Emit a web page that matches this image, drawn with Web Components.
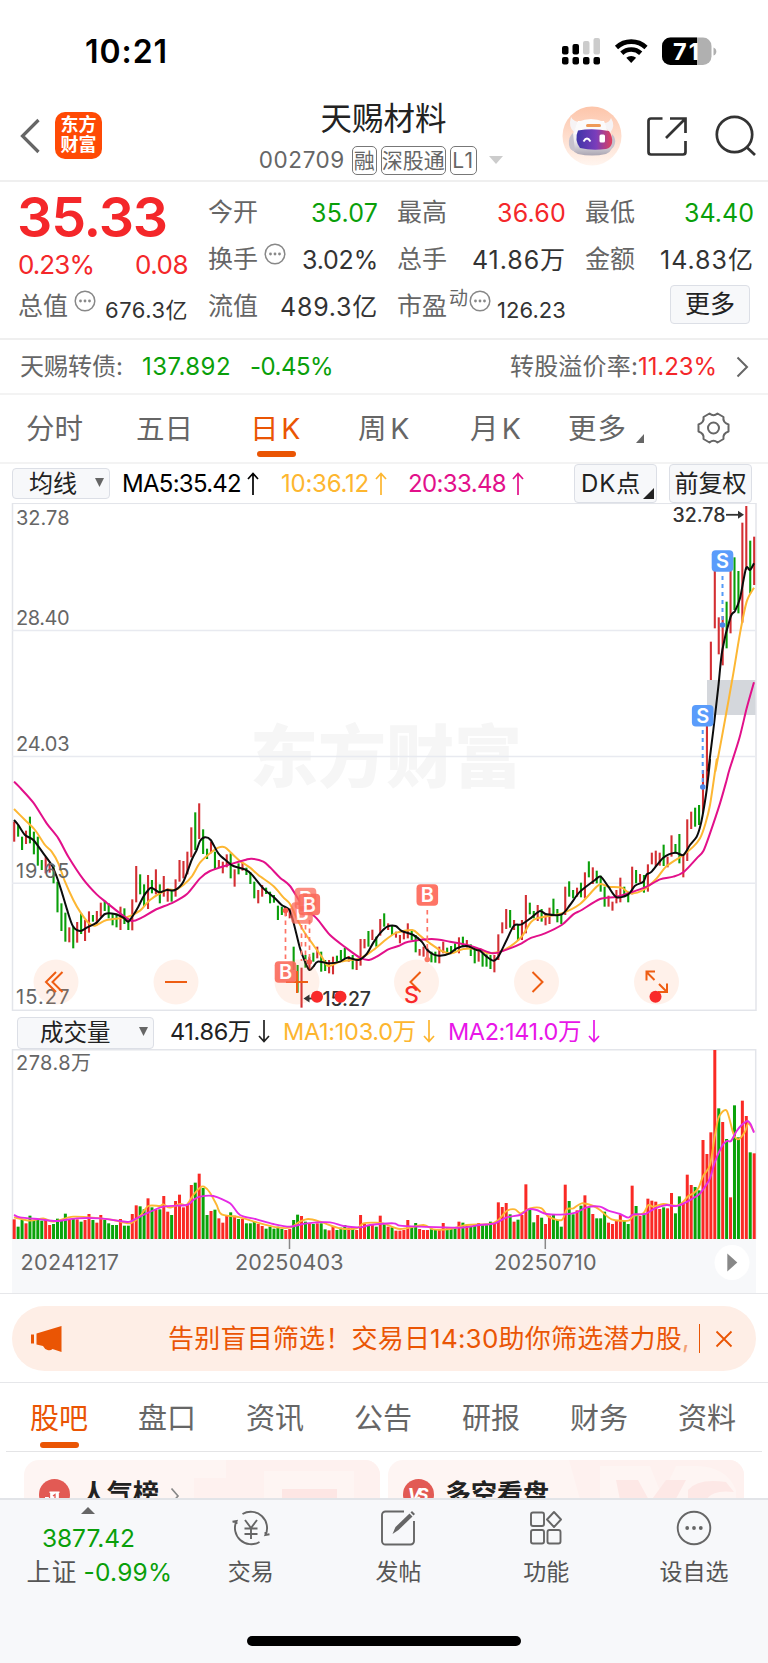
<!DOCTYPE html>
<html lang="zh-CN">
<head>
<meta charset="utf-8">
<title>天赐材料 002709</title>
<style>
	body {
		margin: 0;
		width: 768px;
		height: 1663px;
		overflow: hidden;
		background: #fff;
		color: #333;
		font-family: Inter, "Noto Sans CJK SC", sans-serif;
		font-size: 24px;
		line-height: 1;
	}
</style>
</head>
<body>
<stock-page></stock-page>

<script>
const UP = "#f4272a";
const DOWN = "#0a9f0a";

class BaseElement extends HTMLElement {
	get template() {
		return "";
	}
	connectedCallback() {
		if (this.shadowRoot) return;
		let t = document.createElement("template");
		t.innerHTML = `
		<style>
			:host { display: block; box-sizing: border-box; }
			* { box-sizing: border-box; }
			svg { display: block; flex: none; }
			.row { display: flex; align-items: center; }
			.up { color: ${UP}; }
			.down { color: ${DOWN}; }
		</style>` + this.template;
		this.attachShadow({ mode: "open" });
		this.shadowRoot.appendChild(t.content.cloneNode(true));
	}
}

// One line of text tracked out (or in) to the width in "w"
class FitText extends BaseElement {
	get template() {
		return `<style>:host { display: inline-block; white-space: nowrap; flex: none; }</style><span><slot></slot></span>`;
	}
	connectedCallback() {
		super.connectedCallback();
		let w = Number(this.getAttribute("w"));
		if (!w) return;
		let n = [...this.textContent].length;
		let own = this.shadowRoot.querySelector("span").getBoundingClientRect().width;
		this.style.letterSpacing = (w - own) / n + "px";
		this.style.width = w + "px";
	}
}
customElements.define("fit-text", FitText);

class StatusBar extends BaseElement {
	get template() {
		return `
		<style>
			:host { height: 92px; padding: 35px 51px 0 85px; }
			.row { height: 32px; }
			.time { font-size: 32px; font-weight: 600; color: #000; margin: 2px auto 0 0; }
		</style>
		<div class="row">
			<fit-text class="time" w="83">10:21</fit-text>
			<svg width="155" height="32" viewBox="562 35 155 32">
				<g>
					<rect x="562" y="46" width="6.5" height="8.5" rx="2"/>
					<rect x="572.5" y="44" width="6.5" height="10.500" rx="2"/>
					<rect x="583" y="41" width="6.500" height="13.5" rx="2" fill="#ccc"/>
					<rect x="593.500" y="38" width="6.500" height="16.5" rx="2" fill="#ccc"/>
					<rect x="562" y="57" width="6.500" height="7.500" rx="2"/>
					<rect x="572.500" y="57" width="6.500" height="7.500" rx="2"/>
					<rect x="583" y="57" width="6.500" height="7.500" rx="2"/>
					<rect x="593.500" y="57" width="6.500" height="7.500" rx="2"/>
				</g>
				<g fill="none" stroke="#000" stroke-width="4.600">
					<path d="M616.500 47.500a21.500 21.500 0 0 1 29.500 0"/>
					<path d="M621.800 53.300a13.800 13.800 0 0 1 18.900 0"/>
				</g>
				<path d="M626.300 57.800a7.300 7.300 0 0 1 9.800 0L631.200 63z"/>
				<rect x="662" y="37.500" width="49.500" height="27.500" rx="8.500" fill="#b0b0b0"/>
				<path d="M670.500 37.500H697V65h-26.500a8.500 8.500 0 0 1-8.500-8.500V46a8.500 8.500 0 0 1 8.500-8.500z"/>
				<path d="M713.500 47.500q2.800 1 2.800 4t-2.800 4z" fill="#b0b0b0"/>
				<text x="673" y="60" font-size="23.500" font-weight="700" fill="#fff" textLength="26">71</text>
			</svg>
		</div>`;
	}
}
customElements.define("status-bar", StatusBar);

class NavBar extends BaseElement {
	get template() {
		return `
		<style>
			:host { height: 90px; border-bottom: 2px solid #efefef; }
			.bar { height: 88px; padding: 0 11px 0 20px; }
			.logo {
				width: 47px; height: 47px; margin: 0 158px 0 14px; border-radius: 10px;
				background: #ff4a05; color: #fff; font-size: 18px; font-weight: 700; position: relative; top: -1px;
				display: flex; flex-direction: column; align-items: center; justify-content: center; gap: 2px;
			}
			.title { width: 248px; }
			.name { font-size: 31.500px; text-align: center; color: #222; height: 32px; margin-top: 6px; }
			.code { color: #666; font-size: 22.500px; gap: 4px; margin-top: 10px; height: 30px; }
			.tag { border: 1.500px solid #777; border-radius: 5px; height: 29px; font-size: 21px; display: flex; align-items: center; justify-content: center; }
		</style>
		<div class="row bar">
			<svg width="21" height="36" viewBox="0 0 21 36"><path d="M18.500 2 2.500 18l16 16" fill="none" stroke="#666" stroke-width="3.200"/></svg>
			<div class="logo"><span>东方</span><span>财富</span></div>
			<div class="title">
				<div class="name">天赐材料</div>
				<div class="row code">
					<fit-text w="86" style="margin:0 3px 0 -1px">002709</fit-text>
					<span class="tag" style="width:25px">融</span>
					<span class="tag" style="width:65px">深股通</span>
					<span class="tag" style="width:27px"><fit-text w="22">L1</fit-text></span>
					<svg width="14" height="8" viewBox="0 0 14 8" style="margin-left:8px"><path d="M0 0h14L7 8z" fill="#ccc"/></svg>
				</div>
			</div>
			<svg width="60" height="60" viewBox="0 0 60 60" style="margin-left:55px">
				<defs>
					<linearGradient id="halo" x2="0" y2="1"><stop offset="0" stop-color="#fdc5aa"/><stop offset="1" stop-color="#fff5ef"/></linearGradient>
					<linearGradient id="visor"><stop offset="0" stop-color="#3f35a8"/><stop offset=".55" stop-color="#7a3dbb"/><stop offset="1" stop-color="#e0405c"/></linearGradient>
					<linearGradient id="shell" x2="0" y2="1"><stop offset="0" stop-color="#fff"/><stop offset=".55" stop-color="#f0eef0"/><stop offset="1" stop-color="#aaa5b2"/></linearGradient>
				</defs>
				<circle cx="30" cy="30" r="29.500" fill="url(#halo)"/>
				<path d="M9 11q-3 10 3 15l9-10q-9 1-12-5zM49 12q5 8-1 15l-8-10q7 1 9-5z" fill="#f6f3f5"/>
				<path d="M16 15h26l4 12 5 6q1 12-7 15-14 3-28 0-9-4-9-14l4-6z" fill="url(#shell)"/>
				<path d="M16 16Q29 10 42 16l4 12H12z" fill="#fbfafb"/>
				<path d="M11 27q-5 4-4 12 1 6 6 6zM50 28q4 4 3 9t-4 6z" fill="#c6c2cc"/>
				<rect x="24" y="18" width="15" height="3" rx="1.500" fill="#ef9a58"/>
				<path d="M16 24.500Q31 22 47 25q4 6 3 12-1 5-6 6-14 2-26-1-6-8-2-17.500z" fill="url(#visor)"/>
				<path d="M21.500 35.500q3.500-6 7 0" fill="none" stroke="#fff" stroke-width="1.800"/>
				<rect x="37.500" y="28.500" width="5.500" height="8" rx="1.500" fill="#fff"/>
			</svg>
			<svg width="40" height="40" viewBox="0 0 40 40" style="margin-left:25px" fill="none" stroke="#333" stroke-width="2.700">
				<path d="M15.500 2.500H4A2.500 2.500 0 0 0 1.500 5v31A2.500 2.500 0 0 0 4 38.500h32a2.500 2.500 0 0 0 2.500-2.500V25M23 2.500h15.500V17M38 3 19 22"/>
			</svg>
			<svg width="42" height="42" viewBox="0 0 42 42" style="margin-left:28px" fill="none" stroke="#333" stroke-width="2.700">
				<circle cx="19.500" cy="19.500" r="17.700"/><path d="m31.500 32 8.500 8"/>
			</svg>
		</div>`;
	}
}
customElements.define("nav-bar", NavBar);

// Small circled ellipsis behind a label
class InfoDot extends BaseElement {
	get template() {
		return `
		<style>:host { flex: none; }</style>
		<svg width="22" height="22" viewBox="0 0 22 22"><circle cx="11" cy="11" r="9.800" fill="none" stroke="#888" stroke-width="1.500"/><g fill="#888"><circle cx="6.500" cy="11" r="1.400"/><circle cx="11" cy="11" r="1.400"/><circle cx="15.500" cy="11" r="1.400"/></g></svg>`;
	}
}
customElements.define("info-dot", InfoDot);

class QuotePanel extends BaseElement {
	get template() {
		return `
		<style>
			:host { height: 158px; border-bottom: 2px solid #efefef; display: flex; padding: 7px 13px 0 18px; gap: 20px; }
			.price { width: 170px; }
			.big { display: block; font-size: 55.500px; font-weight: 600; height: 53px; line-height: 55px; margin-left: -1px; }
			.pct { font-size: 26px; height: 41px; justify-content: space-between; padding-top: 4px; }
			.grid { display: grid; grid-template-columns: 170px 169px 169px; column-gap: 19px; grid-auto-rows: 47px; height: 141px; }
			.cell { display: flex; align-items: center; height: 47px; }
			.cell > :last-child { margin-left: auto; }
			.k { font-size: 25px; color: #666; flex: none; }
			.v { font-size: 25px; margin-top: 1px; }
			.s { font-size: 22px; margin-top: 6px; }
			info-dot { margin: -12px 0 0 6px; }
			sup + info-dot { margin-left: 5px; }
			sup { font-size: 19px; color: #666; margin: -16px -4px 0 2px; }
			.more { margin: 0 4px 0 auto; width: 80px; height: 39px; border: 1.500px solid #dcdfe6; border-radius: 4px; background: #f7f8fa; font-size: 25px; display: flex; align-items: center; justify-content: center; color: #222; position: relative; top: -2px; }
		</style>
		<div class="price">
			<fit-text class="big up" w="150">35.33</fit-text>
			<div class="row pct up"><fit-text w="76">0.23%</fit-text><fit-text w="53">0.08</fit-text></div>
			<div class="cell"><span class="k">总值</span><info-dot></info-dot><fit-text class="s" w="83">676.3亿</fit-text></div>
		</div>
		<div class="grid">
			<div class="cell"><span class="k">今开</span><fit-text class="v down" w="67">35.07</fit-text></div>
			<div class="cell"><span class="k">最高</span><fit-text class="v up" w="69">36.60</fit-text></div>
			<div class="cell"><span class="k">最低</span><fit-text class="v down" w="70">34.40</fit-text></div>
			<div class="cell"><span class="k">换手</span><info-dot></info-dot><fit-text class="v" w="76">3.02%</fit-text></div>
			<div class="cell"><span class="k">总手</span><fit-text class="v" w="94">41.86万</fit-text></div>
			<div class="cell"><span class="k">金额</span><fit-text class="v" w="94">14.83亿</fit-text></div>
			<div class="cell"><span class="k">流值</span><fit-text class="v" w="98">489.3亿</fit-text></div>
			<div class="cell"><span class="k">市盈</span><sup>动</sup><info-dot></info-dot><fit-text class="s" w="69">126.23</fit-text></div>
			<div class="cell"><span class="more">更多</span></div>
		</div>`;
	}
}
customElements.define("quote-panel", QuotePanel);

class BondRow extends BaseElement {
	get template() {
		return `
		<style>
			:host { height: 55px; border-bottom: 2px solid #f3f3f3; font-size: 24px; color: #666; }
			.row { height: 53px; padding: 1px 19px 0 20px; }
		</style>
		<div class="row">
			<fit-text w="103">天赐转债:</fit-text>
			<fit-text class="down" w="89" style="margin-left:19px">137.892</fit-text>
			<fit-text class="down" w="83" style="margin-left:19px">-0.45%</fit-text>
			<fit-text w="128" style="margin-left:auto">转股溢价率:</fit-text>
			<fit-text class="up" w="79">11.23%</fit-text>
			<svg width="13" height="22" viewBox="0 0 13 22" style="margin-left:19px"><path d="m1.500 1.500 9.500 9.500-9.500 9.500" fill="none" stroke="#666" stroke-width="2"/></svg>
		</div>`;
	}
}
customElements.define("bond-row", BondRow);

class PeriodTabs extends BaseElement {
	get template() {
		return `
		<style>
			:host { height: 69px; border-bottom: 2px solid #f3f3f3; font-size: 28.500px; color: #666; }
			.bar { height: 67px; padding: 2px 38px 0 26px; }
			.on { color: #ea5504; display: flex; flex-direction: column; align-items: center; gap: 8px; margin: 13px 0 0 57px; }
			.on::after { content: ""; width: 39px; height: 6px; border-radius: 3px; background: currentColor; }
		</style>
		<div class="row bar">
			<span>分时</span>
			<span style="margin-left:53px">五日</span>
			<span class="on"><fit-text w="53">日K</fit-text></span>
			<fit-text w="55" style="margin-left:55px">周K</fit-text>
			<fit-text w="54" style="margin-left:57px">月K</fit-text>
			<span class="row" style="margin-left:44px"><fit-text w="59">更多</fit-text><svg width="8" height="9" viewBox="0 0 8 9" style="margin:18px 0 0 9px"><path d="M8 0v9H0z" fill="#666"/></svg></span>
			<svg width="33" height="32" viewBox="0 0 33 32" style="margin:-3px 0 0 auto" fill="none" stroke="#666" stroke-width="2" stroke-linejoin="round">
				<path d="M12.500 1.500Q16.500 5 20.500 1.500L26.500 5Q25.500 10.500 31.500 12.500V19.500Q25.500 21.500 26.500 27L20.500 30.500Q16.500 27 12.500 30.500L6.500 27Q7.500 21.500 1.500 19.500V12.500Q7.500 10.500 6.500 5Z"/>
				<circle cx="16.500" cy="16" r="5.500"/>
			</svg>
		</div>`;
	}
}
customElements.define("period-tabs", PeriodTabs);

class DropBox extends BaseElement {
	get template() {
		return `
		<style>
			:host { display: flex; align-items: center; height: 31px; flex: none; border: 1.500px solid #dcdfe6; border-radius: 4px; background: #f7f8fa; color: #222; padding-right: 5px; }
			svg { margin: -3px 0 0 auto; }
		</style>
		<slot></slot>
		<svg width="9" height="9" viewBox="0 0 9 9"><path d="M0 0h9L4.500 9z" fill="#666"/></svg>`;
	}
}
customElements.define("drop-box", DropBox);

// Thin arrow after an average, dir="up" or "down"
class TrendArrow extends BaseElement {
	get template() {
		let d = this.getAttribute("dir") == "up" ? "M6 23V1.500M1 7l5-5.500L11 7" : "M6 0v21.500M1 16l5 5.500 5-5.500";
		return `
		<style>:host { flex: none; }</style>
		<svg width="12" height="23" viewBox="0 0 12 23"><path d="${d}" fill="none" stroke="currentColor" stroke-width="1.700"/></svg>`;
	}
}
customElements.define("trend-arrow", TrendArrow);

class AverageRow extends BaseElement {
	get template() {
		return `
		<style>
			:host { height: 39px; }
			.bar { height: 39px; padding: 0 16px 0 12px; font-size: 24px; }
			drop-box { width: 98px; padding-left: 16px; }
			trend-arrow { margin-left: 6px; }
			.btn { height: 39px; border: 1.500px solid #dcdfe6; border-radius: 4px; background: #f7f8fa; color: #222; display: flex; align-items: center; justify-content: center; }
		</style>
		<div class="row bar">
			<drop-box>均线</drop-box>
			<fit-text w="119" style="margin-left:12px;color:#000">MA5:35.42</fit-text><trend-arrow dir="up" style="color:#000"></trend-arrow>
			<fit-text w="88" style="margin-left:22px;color:#fdb62f">10:36.12</fit-text><trend-arrow dir="up" style="color:#fdb62f"></trend-arrow>
			<fit-text w="98" style="margin-left:21px;color:#e2108a">20:33.48</fit-text><trend-arrow dir="up" style="color:#e2108a"></trend-arrow>
			<span class="btn" style="width:83px;margin-left:auto;padding-left:4px"><fit-text w="60">DK点</fit-text><svg width="11" height="11" viewBox="0 0 11 11" style="margin:20px 0 0 2px"><path d="M11 0v11H0z" fill="#222"/></svg></span>
			<span class="btn" style="width:83px;margin-left:12px">前复权</span>
		</div>`;
	}
}
customElements.define("average-row", AverageRow);

// Bars of the day chart: colour, high, low (pixels down the page)
const BARS = [];
function addBars(top, text) {
	for (let s of text.trim().split(/\s+/)) {
		let [a, b] = s.slice(1).split("-");
		BARS.push({ c: s[0], hi: top + a / 3, lo: top + b / 3 });
	}
}
addBars(740, `R245-305 G255-290 G290-330 R272-312 G230-310 G275-343 G290-377 G360-390 R350-400 R370-398
	G375-430 G425-517 G490-573 G518-605 R562-607 G560-625 R546-608 G520-582 R540-603 R514-578
	G525-545 R513-550 R488-530 G483-513 G490-535 G520-556 G520-562 R500-570 G505-552 G535-570
	R478-571 R378-487 G403-463 G433-498 R405-507 G420-460 R388-463 G433-490 R408-470 R445-485
	G450-485 R418-470 R360-425 R363-415 R335-403 R262-352 G217-330 R190-297 G268-342 G326-357
	R305-340 G335-388 R360-383 R365-400 R343-382 G340-415 R388-440 G370-403 R368-392 G383-405
	G397-432 G425-475 R450-490 R435-470 G443-462 G455-490 G465-488 G497-540 G500-525 R505-528`);
addBars(780, `R385-415 G500-570 G555-638 R563-683 G525-563 R530-570 G518-545 R500-535 G515-575 G540-573
	R540-580 R530-583 G527-545 G510-540 G503-535 R528-545 G525-568 R540-570 R477-557 R477-505
	G453-500 R449-480 G470-500 R417-467 G400-440 R430-450 G435-465 R455-473 R465-490 R455-478
	R430-475 G450-480 G465-517 R507-527 R500-530 R505-545 G515-547 G515-548 R500-550 R485-520
	G503-525 G498-520 G490-515 R472-520 G470-500 R480-503 G493-528 G507-550 R510-545 G520-560
	G523-560 G525-567 R525-577 R463-540 R427-460 R387-447 G390-443 R420-450 G433-483 R420-480 R345-460`);
addBars(740, `G488-523 G513-535 R495-543 G507-545 R520-556 R503-552 G476-525 G507-547 G520-552 R440-525
	G424-470 G450-475 R443-470 G428-472 R397-475 G364-412 R382-432 G392-430 G407-455 G440-500
	R467-500 R485-512 R450-490 R413-487 G440-472 G455-487 R380-463 G390-430 R402-427 G405-458
	R373-455 R338-373 R332-380 R338-377 G314-378 R350-382 R286-350 G312-340 G282-370 R343-412
	R238-363 R215-267 G203-260 G195-255 R90-220`);
addBars(490, `R680-890 R455-570 R230-415 R382-493 R378-526 G335-475 R213-430 G202-360 G243-370 R98-398
	R48-240 G152-310 R140-285`);

const VOLUMES = [643, 665, 645, 655, 632, 645, 643, 647, 645, 660, 657, 641, 645, 626, 645, 640, 643, 650, 645, 627,
	645, 653, 630, 645, 655, 660, 660, 642, 662, 662, 627, 601, 604, 613, 580, 607, 615, 613, 573, 620,
	630, 588, 569, 607, 600, 540, 533, 506, 549, 630, 618, 614, 640, 653, 633, 622, 632, 642, 642, 655,
	655, 650, 657, 663, 671, 665, 671, 665, 672, 675, 672, 645, 629, 633, 650, 655, 657, 655, 655, 673,
	676, 663, 675, 668, 660, 668, 667, 675, 630, 657, 660, 660, 665, 632, 657, 665, 667, 677, 677, 675,
	645, 667, 654, 672, 675, 675, 673, 675, 673, 654, 670, 672, 670, 650, 653, 662, 665, 660, 654, 660,
	658, 650, 655, 592, 606, 594, 628, 650, 644, 630, 538, 610, 652, 630, 638, 657, 632, 627, 645, 665,
	539, 588, 628, 616, 602, 571, 607, 627, 640, 640, 620, 653, 657, 647, 630, 645, 657, 542, 603, 633,
	628, 581, 587, 590, 612, 607, 610, 564, 625, 574, 597, 509, 540, 546, 556, 405, 447, 382, 135, 310,
	351, 402, 577, 301, 397, 287, 333, 442, 445];

const STEP = 3.936;
const barX = i => 14.2 + i * STEP;

// Smooth curve through runs of points, each run with its own origin
function curve(...runs) {
	let p = [];
	for (let [ox, oy, text] of runs) {
		for (let s of text.trim().split(/\s+/)) {
			let [x, y] = s.split(",");
			p.push([ox + x / 3, oy + y / 3]);
		}
	}
	let d = `M${p[0]}`;
	for (let i = 0; i < p.length - 1; i++) {
		let a = p[i - 1] || p[i], b = p[i], c = p[i + 1], e = p[i + 2] || c;
		d += `C${b[0] + (c[0] - a[0]) / 7} ${b[1] + (c[1] - a[1]) / 7} ${c[0] - (e[0] - b[0]) / 7} ${c[1] - (e[1] - b[1]) / 7} ${c[0]} ${c[1]}`;
	}
	return d;
}

const MA5 = curve(
	[0, 740, "42,240 55,255 75,285 100,300 130,340 155,375 170,410 185,455 200,505 218,557 240,573 262,562 290,548 315,522 345,522 370,533 385,545 400,525 415,500 430,470 445,450 455,443 478,457 500,450 525,450 550,425 575,360 590,330 600,303 615,292 632,300 655,340 680,363 700,378 735,388 755,403 790,445 825,475 845,495"],
	[250, 780, "118,390 130,425 150,505 165,545 178,570 190,560 203,545 240,550 270,545 292,533 325,540 350,522 370,488 390,460 412,440 437,438 455,453 490,465 515,485 532,510 550,523 570,527 600,520 620,505 650,498 680,510"],
	[480, 740, "0,632 20,650 40,662 55,650 80,600 102,557 125,553 155,532 180,513 200,523 245,523 270,495 300,455 345,420 362,410 385,440 410,472 445,463 465,437 490,425 500,403 515,395 550,353 585,338 610,345 630,315 650,290 660,262 668,225 680,150 690,60"],
	[640, 490, "205,840 220,720 235,590 247,480 272,380 285,363 300,325 318,235 330,240 342,220"]);
const MA10 = curve(
	[0, 740, "42,207 75,240 105,270 135,315 155,335 175,370 195,425 220,480 240,515 265,548 285,557 320,540 380,532 420,512 450,480 500,450 525,450 550,435 575,410 600,368 630,340 655,323 675,322 695,340 720,363"],
	[250, 780, "0,263 25,285 70,318 100,352 120,372 145,425 165,460 190,495 215,530 235,558 270,545 330,535 370,510 410,477 440,458 487,450 510,467 540,490 575,513 605,520 640,507 690,508"],
	[480, 740, "20,639 60,635 90,620 125,590 150,550 170,535 245,520 300,492 345,445 362,432 385,440 425,443 450,460 490,450 530,415 560,378 610,345 640,320 660,295 675,255 690,195 710,60"],
	[640, 490, "227,840 255,690 280,550 300,430 320,335 342,293"]);
const MA20 = curve(
	[0, 740, "42,125 60,143 100,188 140,250 175,295 205,350 250,418 290,463 320,488 360,520 395,543 425,533 465,510 520,487 560,463 600,415 630,393 690,373 735,360"],
	[250, 780, "5,236 40,245 60,262 90,293 120,318 160,380 200,415 240,465 290,505 330,533 357,540 380,530 415,508 445,498 475,485 545,477 600,485 660,497"],
	[480, 740, "0,627 40,640 90,625 125,610 150,595 195,580 245,555 280,523 305,510 360,477 410,470 460,455 500,440 540,418 580,410 610,397 650,355 670,333 690,280 720,190 740,120"],
	[640, 490, "268,840 298,745 320,655 342,577"]);
const VMA1 = curve(
	[0, 1005, "42,637 90,647 130,640 160,650 220,635 300,640 340,645 390,655 420,633 445,603 480,603 490,598 510,608 540,597 560,600 580,570 600,548 612,545 630,563 650,600 665,628 720,637 770,652 830,667 870,668 900,650 925,642 960,650 1020,670 1070,670 1090,655 1120,653 1150,655"],
	[400, 1005, "0,672 70,660 100,673 150,672 200,660 270,657 295,645 320,618 345,613 362,625 390,610 425,610 445,635 485,645 500,613 520,610 545,595 580,603 600,615 635,643 685,647 700,633 730,625 745,600 760,605 790,597 830,602 850,590 865,573 880,565 895,550 910,512 930,480 945,390 957,335 980,317 1000,385 1015,403 1035,380 1045,355 1062,380"]);
const VMA2 = curve(
	[0, 1005, "42,630 60,637 120,643 170,648 230,640 300,640 360,648 390,650 430,630 490,605 560,600 580,585 600,575 640,573 690,595 720,630 770,643 820,657 870,665 920,655 990,652 1030,663 1080,667 1110,660 1180,655"],
	[400, 1005, "0,662 60,665 180,668 240,660 285,655 320,637 360,630 385,613 410,615 440,627 495,628 530,622 560,607 600,605 625,617 660,627 685,638 700,628 735,627 765,610 800,600 835,602 895,570 915,545 930,520 945,470 965,425 980,408 993,408 1010,378 1025,360 1042,348 1052,358 1062,383"]);

class KChart extends BaseElement {
	badge(letter, x, y, color, opacity = 1) {
		return `<g opacity="${opacity}"><rect x="${x - 10.800}" y="${y - 10.800}" width="21.600" height="21.600" rx="4" fill="${color}"/>
			<text x="${x}" y="${y + 7.200}" font-size="20" font-weight="600" fill="#fff" text-anchor="middle">${letter}</text></g>`;
	}
	round(x, icon) {
		return `<g transform="translate(${x} 982)"><circle r="22.500" fill="#fd8c4f" fill-opacity=".12"/><path d="${icon}" fill="none" stroke="#ee5d12" stroke-width="2"/></g>`;
	}
	get template() {
		let labels = [["32.78", 524.5], ["28.40", 624.5], ["24.03", 750.5], ["19.65", 877.5], ["15.27", 1004]];
		let bars = BARS.map((b, i) => `<path d="M${barX(i)} ${b.hi}V${b.lo}" stroke="${b.c == "R" ? "#d32f33" : DOWN}"/>`);
		return `
		<svg width="768" height="508" viewBox="0 503 768 508">
			<text x="250" y="782" font-size="68" font-weight="900" fill="#f6f6f6" textLength="272">东方财富</text>
			<rect x="707" y="680" width="49" height="35" fill="#d4d7dc"/>
			<g stroke="#e8eaf0" stroke-width="1.500" fill="none">
				<rect x="12.500" y="503.300" width="743.500" height="507" stroke="#e3e5ea"/>
				<path d="M12 630.500H756M12 756.500H756M12 883.300H756"/>
			</g>
			<g stroke-width="2.100">${bars.join("")}</g>
			<g fill="none" stroke-width="2" stroke-linejoin="round">
				<path d="${MA10}" stroke="#fdb733"/>
				<path d="${MA20}" stroke="#e2108a"/>
				<path d="${MA5}" stroke="#0c0c0c"/>
			</g>
			<g fill="#666" font-size="20">
				${labels.map(([t, y]) => `<text x="16" y="${y}" textLength="53.500">${t}</text>`).join("")}
			</g>
			<text x="672.500" y="522" font-size="19.500" font-weight="500" fill="#333" textLength="53">32.78</text>
			<path d="M726 514.800h13" stroke="#333" stroke-width="1.800"/><path d="m738 510.800 6 4-6 4z" fill="#333"/>

			${this.round(56, "M6.500-10-3.500 0 6.500 10M0-10-10 0 0 10")}
			${this.round(176, "M-11 0h22")}
			${this.round(297, "M-11 0h22M0-11v22")}
			${this.round(416.500, "M4-10-6 0 4 10")}
			${this.round(536.500, "M-4-10 6 0-4 10")}
			${this.round(656.500, "M-10-1.500V-10.500H-1.500M-10-10-2-2M10.500 1.500v8.500H1.500M10.500 10 2.500 2")}

			<g stroke="#fe7466" stroke-width="1.700" stroke-dasharray="4.500 4">
				<path d="M285.500 912v48M301.500 925v36M305.500 925v36M309.500 920v40M427.300 910v48"/>
			</g>
			<circle cx="285.500" cy="910.500" r="2.800" fill="#fb5a4c"/>
			<circle cx="309.300" cy="962" r="2.800" fill="#fb5a4c"/>
			<circle cx="427.300" cy="959.500" r="2.800" fill="#fb7a66"/>
			${this.badge("B", 285.500, 972, "#fb6a5a", .9)}
			${this.badge("B", 302, 913, "#fb6a5a", .75)}
			${this.badge("B", 305.500, 898.500, "#fb6a5a", .75)}
			${this.badge("B", 309.300, 904.500, "#fb6a5a", .9)}
			${this.badge("B", 427.300, 895, "#fe7466")}
			<g stroke="#559af8" stroke-width="2" stroke-dasharray="4 4">
				<path d="M722.500 576v48M702.700 730v54"/>
			</g>
			<circle cx="722.500" cy="625" r="2.800" fill="#4b86e8"/><circle cx="702.800" cy="787" r="2.800" fill="#4b86e8"/>
			${this.badge("S", 722.500, 561, "#5a9cfb")}
			${this.badge("S", 702.700, 715.700, "#5a9cfb")}

			<path d="M312 998.500h-4" stroke="#333" stroke-width="1.800"/><path d="m303.500 998.500 6-4v8z" fill="#333"/>
			<text x="322.500" y="1006" font-size="19.500" font-weight="500" fill="#333" textLength="48.500">15.27</text>
			<g fill="#f92a2a"><circle cx="317" cy="996.700" r="6"/><circle cx="340.500" cy="996.700" r="6"/><circle cx="655.500" cy="996.700" r="6"/></g>
			<text x="404" y="1002.500" font-size="23" font-weight="500" fill="#f92a2a">S</text>
		</svg>`;
	}
}
customElements.define("k-chart", KChart);

class VolumeRow extends BaseElement {
	get template() {
		return `
		<style>
			.bar { height: 38px; padding: 3px 0 0 17px; font-size: 23.500px; }
			drop-box { width: 137px; padding-left: 22px; height: 32px; margin-top: 2px; }
			trend-arrow { margin: -1px 0 0 7px; }
		</style>
		<div class="row bar">
			<drop-box>成交量</drop-box>
			<fit-text w="81" style="margin-left:16px;color:#222">41.86万</fit-text><trend-arrow style="color:#222"></trend-arrow>
			<fit-text w="133" style="margin-left:13px;color:#fdb62f">MA1:103.0万</fit-text><trend-arrow style="color:#fdb62f"></trend-arrow>
			<fit-text w="133" style="margin-left:13px;color:#e816e8">MA2:141.0万</fit-text><trend-arrow style="color:#e816e8"></trend-arrow>
		</div>`;
	}
}
customElements.define("volume-row", VolumeRow);

class VolumeChart extends BaseElement {
	get template() {
		let cols = VOLUMES.map((v, i) => {
			let y = 1005 + v / 3;
			let c = i == 179 ? "G" : BARS[i].c;
			return `<rect x="${barX(i) - 1.500}" y="${y}" width="3" height="${1239 - y}" fill="${c == "R" ? "#fa2a25" : "#0aa30a"}"/>`;
		});
		return `
		<svg width="768" height="244" viewBox="0 1049 768 244">
			<rect x="12" y="1239" width="744" height="54" fill="#f7f8fa"/>
			<path d="M12.500 1239V1049.700H755.700V1239" fill="none" stroke="#e3e5ea" stroke-width="1.500"/>
			<text x="16" y="1069.500" font-size="20" fill="#666" textLength="75">278.8万</text>
			${cols.join("")}
			<path d="${VMA1}" fill="none" stroke="#fdb733" stroke-width="1.900"/>
			<path d="${VMA2}" fill="none" stroke="#e52be5" stroke-width="1.900"/>
			<path d="M289.500 1239v10M545.300 1239v10" stroke="#888" stroke-width="1.500"/>
			<g fill="#666" font-size="21.500">
				<text x="20.500" y="1270" textLength="98.500">20241217</text>
				<text x="235" y="1270" textLength="108.500">20250403</text>
				<text x="494" y="1270" textLength="102.500">20250710</text>
			</g>
			<circle cx="732" cy="1262.500" r="17.500" fill="#fff"/>
			<path d="M727.300 1253.500v18l10-9z" fill="#888"/>
		</svg>`;
	}
}
customElements.define("volume-chart", VolumeChart);

class PromoBanner extends BaseElement {
	get template() {
		return `
		<style>
			:host { height: 90px; border: solid #e6e7ea; border-width: 1.500px 0; padding: 12px 12px; }
			.pill { height: 65px; border-radius: 33px; background: #feeee6; color: #ea5504; padding: 0 23px 0 19px; font-size: 26px; }
			i { width: 1.500px; height: 29px; background: #ea5504; margin: 0 15px 0 auto; }
		</style>
		<div class="row pill">
			<svg width="32" height="26" viewBox="0 0 32 26" fill="#ea5504"><path d="M0 8.500h3v9H0zM5.500 7.500 30.500 0v26L21.500 23q-2 2-5 1t-4.500-4l-6.500-1.500z"/></svg>
			<fit-text w="514" style="margin-left:105px">告别盲目筛选！交易日14:30助你筛选潜力股</fit-text><span style="opacity:.5">,</span>
			<i></i>
			<svg width="18" height="18" viewBox="0 0 18 18"><path d="m1.500 1.500 15 15M16.500 1.500l-15 15" stroke="#ea5504" stroke-width="1.800"/></svg>
		</div>`;
	}
}
customElements.define("promo-banner", PromoBanner);

class SectionTabs extends BaseElement {
	get template() {
		return `
		<style>
			:host { height: 69px; margin: 0 6px; border-bottom: 1.500px solid #e4e4e6; font-size: 29px; color: #666; }
			.row { height: 67px; padding: 4px 26px 0 24px; justify-content: space-between; }
			.on { color: #ea5504; display: flex; flex-direction: column; align-items: center; gap: 9px; margin-top: 15px; }
			.on::after { content: ""; width: 39px; height: 6px; border-radius: 3px; background: currentColor; }
		</style>
		<div class="row">
			<span class="on">股吧</span><span>盘口</span><span>资讯</span><span>公告</span><span>研报</span><span>财务</span><span>资料</span>
		</div>`;
	}
}
customElements.define("section-tabs", SectionTabs);

class RankCard extends BaseElement {
	get template() {
		return `
		<style>
			:host { flex: 1; height: 70px; border-radius: 15px 15px 0 0; background: #fef5f3; overflow: hidden; }
			.row { padding: 19px 0 0 15px; gap: 11px; font-size: 26px; font-weight: 700; color: #222; position: relative; height: 50px; align-items: flex-start; }
			.label { padding-top: 2px; }
		</style>
		<slot name="art"></slot>
		<div class="row"><slot name="icon"></slot><span class="label"><slot></slot></span></div>`;
	}
}
customElements.define("rank-card", RankCard);

class CardStrip extends BaseElement {
	get template() {
		return `
		<style>
			:host { height: 46px; padding: 8px 24px 0; overflow: hidden; }
			.cards { display: flex; gap: 8px; }
			rank-card { position: relative; }
			[slot=art] { position: absolute; left: 0; top: 0; }
		</style>
		<div class="cards">
			<rank-card>
				<svg slot="art" width="356" height="50" viewBox="0 0 356 50"><path d="M202 0H356V50H170V18h32z" fill="#fef1ef"/><path d="M240 11h90v40h-90z" fill="#fef5f3"/><path d="M258 29h55v21h-55z" fill="#fde6e4"/></svg>
				<svg slot="icon" width="31" height="31" viewBox="0 0 31 31"><circle cx="15.500" cy="15.500" r="15.500" fill="#e25a54"/><path d="M6 18h4.500v-5.500h10V20H25v11H6z" fill="#fff"/><path d="M10.500 14v14M20.500 14v14M14 17l2-1.500V24" stroke="#e25a54" stroke-width="1.300" fill="none"/></svg>
				人气榜<svg width="10" height="18" viewBox="0 0 10 18" style="display:inline-block;margin-left:11px;vertical-align:-2px"><path d="m1.500 1.500 6.500 7.500-6.500 7.500" fill="none" stroke="#888" stroke-width="1.700"/></svg>
			</rank-card>
			<rank-card>
				<svg slot="art" width="356" height="50" viewBox="0 0 356 50"><path d="M181 0H356V50H195z" fill="#fef1ef"/><path d="M212 6h50l12 30 14-30h20q30 0 40 24v20H212z" fill="#fef5f3"/><path d="M228 20h22l12 22 16-22h20l-16 30h-48zM300 30q10-12 38-8l8 10q-30-4-30 18h-16z" fill="#fde8e6"/></svg>
				<svg slot="icon" width="31" height="31" viewBox="0 0 31 31"><circle cx="15.500" cy="15.500" r="15.500" fill="#e25a54"/><text x="4.500" y="22" font-size="18" font-weight="700" font-style="italic" fill="#fff" textLength="21">VS</text></svg>
				多空看盘
			</rank-card>
		</div>`;
	}
}
customElements.define("card-strip", CardStrip);

class TabItem extends BaseElement {
	get template() {
		return `
		<style>
			:host { width: 148px; display: flex; flex-direction: column; align-items: center; gap: 15px; padding-top: 10px; font-size: 23px; color: #555; }
		</style>
		<svg width="40" height="36" viewBox="0 0 40 36" fill="none" stroke="#666" stroke-width="1.900">${ICONS[this.getAttribute("icon")]}</svg>
		<slot></slot>`;
	}
}
const ICONS = {
	trade: `<path d="M11.500 4A16.300 16.300 0 0 1 34.500 25l4-.8M28.500 32A16.300 16.300 0 0 1 5.500 11L1.500 11.800M34.500 25v-3M5.500 11v3"/><path d="m14 10 6 8 6-8M20 18v11M13.500 18.500h13M13.500 24h13"/>`,
	post: `<path d="M26 1.500H7.500a3.500 3.500 0 0 0-3.500 3.500v26a3.500 3.500 0 0 0 3.500 3.500h25a3.500 3.500 0 0 0 3.500-3.500V11"/><path d="m14.500 24 3-7L31.500 3.500l3 3L20.500 20z" fill="#666" stroke="none"/><path d="m32.500 2.500 1.500-1.500 3 3-1.500 1.500z" fill="#666" stroke="none"/>`,
	more: `<rect x="5" y="2.500" width="13" height="13.500" rx="2"/><rect x="5" y="20" width="13" height="13.500" rx="2"/><rect x="21.500" y="20" width="13" height="13.500" rx="2"/><path d="m28 2 7 7.500-7 7.500-7-7.500z" stroke-linejoin="round"/>`,
	watch: `<circle cx="20" cy="18" r="16.300"/><g fill="#666" stroke="none"><circle cx="13.200" cy="18" r="1.900"/><circle cx="20" cy="18" r="1.900"/><circle cx="26.800" cy="18" r="1.900"/></g>`
};
customElements.define("tab-item", TabItem);

class BottomBar extends BaseElement {
	get template() {
		return `
		<style>
			:host { height: 165px; border-top: 2px solid #e2e4e8; background: #f7f8fa; }
			.bar { display: flex; height: 136px; }
			.index { width: 177px; display: flex; flex-direction: column; align-items: center; padding-top: 7px; font-size: 24.500px; }
			.index .row { margin-top: 9px; gap: 6px; color: #555; margin-left: 22px; }
			.home { width: 274px; height: 10px; border-radius: 5px; background: #000; margin: 0 auto; }
		</style>
		<div class="bar">
			<div class="index">
				<svg width="14" height="7" viewBox="0 0 14 7"><path d="M0 7 7 0l7 7z" fill="#666"/></svg>
				<fit-text class="down" w="93" style="margin-top:12px">3877.42</fit-text>
				<div class="row"><fit-text w="51">上证</fit-text><fit-text class="down" w="89">-0.99%</fit-text></div>
			</div>
			<tab-item icon="trade">交易</tab-item>
			<tab-item icon="post">发帖</tab-item>
			<tab-item icon="more">功能</tab-item>
			<tab-item icon="watch">设自选</tab-item>
		</div>
		<div class="home"></div>`;
	}
}
customElements.define("bottom-bar", BottomBar);

class StockPage extends BaseElement {
	get template() {
		return `
		<style>
			:host { width: 768px; height: 1663px; overflow: hidden; background: #fff; }
		</style>
		<status-bar></status-bar>
		<nav-bar></nav-bar>
		<quote-panel></quote-panel>
		<bond-row></bond-row>
		<period-tabs></period-tabs>
		<average-row></average-row>
		<k-chart></k-chart>
		<volume-row></volume-row>
		<volume-chart></volume-chart>
		<promo-banner></promo-banner>
		<section-tabs></section-tabs>
		<card-strip></card-strip>
		<bottom-bar></bottom-bar>`;
	}
}
customElements.define("stock-page", StockPage);
</script>
</body>
</html>
